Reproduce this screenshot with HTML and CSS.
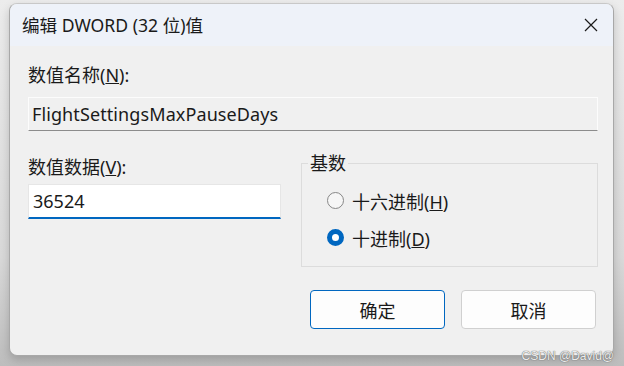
FILE: index.html
```html
<!DOCTYPE html>
<html lang="zh-CN">
<head>
    <meta charset="UTF-8">
    <meta name="viewport" content="width=device-width, initial-scale=1.0">
    <title>编辑 DWORD (32 位)值</title>
    <link rel="stylesheet" href="styles.css">
</head>
<body>
    <!-- Dialog window -->
    <div class="dialog">
        <div class="title-bar">
            <span class="title">编辑 DWORD (32 位)值</span>
            <svg class="close" width="14" height="14" viewBox="0 0 14 14">
                <path d="M1 1 L13 13 M13 1 L1 13" stroke="#1a1a1a" stroke-width="1.2" fill="none"/>
            </svg>
        </div>

        <div class="content">
            <label class="field-label">数值名称(<u>N</u>):</label>
            <div class="name-box">FlightSettingsMaxPauseDays</div>

            <div class="data-row">
                <div class="data-col">
                    <label class="field-label">数值数据(<u>V</u>):</label>
                    <div class="data-box">36524</div>
                </div>

                <fieldset class="base-group">
                    <legend>基数</legend>
                    <div class="radio-row">
                        <span class="radio"></span>
                        <span>十六进制(<u>H</u>)</span>
                    </div>
                    <div class="radio-row">
                        <span class="radio checked"></span>
                        <span>十进制(<u>D</u>)</span>
                    </div>
                </fieldset>
            </div>

            <div class="buttons">
                <button class="btn primary">确定</button>
                <button class="btn">取消</button>
            </div>
        </div>
    </div>

    <div class="watermark">CSDN @David@</div>
</body>
</html>
```

FILE: styles.css
```css
* {
    margin: 0;
    padding: 0;
    box-sizing: border-box;
}

body {
    font-family: "Noto Sans", "Noto Sans CJK SC", sans-serif;
    width: 624px;
    height: 366px;
    overflow: hidden;
    background: linear-gradient(180deg, #ececec 0%, #d9d9d9 70%, #bdbdbd 100%);
    padding: 3px 0 0 9px;
    position: relative;
    color: #1a1a1a;
}

.dialog {
    width: 605px;
    height: 353px;
    background: #f0f0f0;
    border: 1px solid #a8a8a8;
    border-top-color: #c8c8c8;
    border-radius: 8px;
    overflow: hidden;
    box-shadow: 0 4px 10px rgba(0, 0, 0, 0.18);
    display: flex;
    flex-direction: column;
}

.title-bar {
    height: 42px;
    background: #eef2f9;
    display: flex;
    align-items: center;
    justify-content: space-between;
    padding: 0 15px 0 12px;
}

.title {
    font-size: 17.6px;
    line-height: 24px;
}

.close {
    display: block;
}

.content {
    padding: 17px 17px 0 18px;
    display: flex;
    flex-direction: column;
}

.field-label {
    font-size: 18px;
    line-height: 24px;
    display: block;
}

.name-box {
    margin-top: 10px;
    margin-right: -2px;
    height: 34px;
    background: #f0f0f0;
    border: 1px solid #fcfcfc;
    border-bottom: 1px solid #8c8c8c;
    font-size: 18px;
    line-height: 32px;
    padding-left: 3px;
    letter-spacing: 0.1px;
}

.data-row {
    display: flex;
    justify-content: space-between;
    margin-top: 22px;
}

.data-col {
    width: 253px;
    padding-top: 2px;
}

.data-box {
    margin-top: 5px;
    height: 35px;
    background: #fff;
    border: 1px solid #e6e6e6;
    border-bottom: 2px solid #0067c0;
    font-size: 18px;
    line-height: 32px;
    padding-left: 4px;
}

.base-group {
    width: 297px;
    height: 114px;
    margin-right: -2px;
    border: 1px solid #dcdcdc;
    padding: 9px 0 0 0;
}

.base-group legend {
    font-size: 18px;
    line-height: 20px;
    padding: 0 2px;
    margin-left: 6px;
}

.radio-row {
    display: flex;
    align-items: center;
    gap: 8px;
    font-size: 18px;
    height: 37px;
    padding-left: 25px;
}

.radio {
    width: 17px;
    height: 17px;
    border-radius: 50%;
    border: 1px solid #878787;
    background: #f6f6f6;
    flex-shrink: 0;
}

.radio.checked {
    border: 5.5px solid #0067c0;
    background: #fff;
}

.buttons {
    display: flex;
    justify-content: flex-end;
    gap: 16px;
    margin-top: 23px;
}

.btn {
    width: 135px;
    height: 39px;
    font-family: inherit;
    font-size: 18px;
    color: #1a1a1a;
    background: #fdfdfd;
    border: 1px solid #d0d0d0;
    border-radius: 4px;
}

.btn.primary {
    border-color: #0067c0;
}

.watermark {
    position: absolute;
    right: 10px;
    bottom: 3px;
    font-family: "Liberation Sans", sans-serif;
    font-size: 12px;
    color: #ececec;
    text-shadow: 0 0 1px #6a6a6a, 0 0 1px #6a6a6a;
}
```
